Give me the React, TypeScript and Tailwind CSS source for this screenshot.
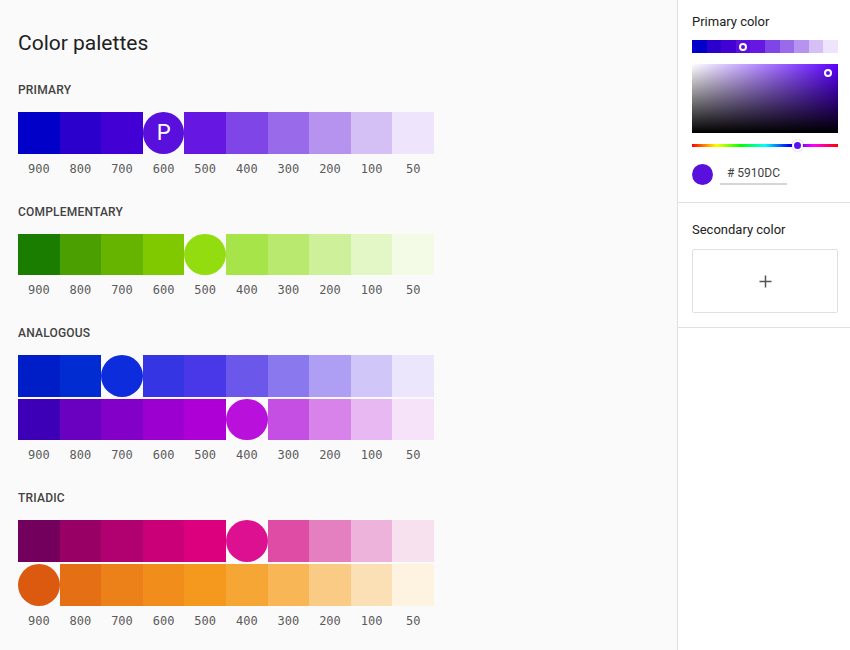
import React from 'react';

type Row = { colors: string[]; circle: number; label?: string };

interface Palette {
  name: string;
  rows: Row[];
}

const shades = ['900', '800', '700', '600', '500', '400', '300', '200', '100', '50'];

const palettes: Palette[] = [
  {
    name: 'Primary',
    rows: [
      {
        colors: ['#0000c8', '#2c00cc', '#4300d4', '#5910dc', '#6618e2', '#8045e6', '#996ae9', '#b693ee', '#d5c0f5', '#eee4fb'],
        circle: 3,
        label: 'P',
      },
    ],
  },
  {
    name: 'Complementary',
    rows: [
      {
        colors: ['#1b7d00', '#4b9f00', '#66b300', '#80c800', '#93dc10', '#a6e44a', '#b9ea6f', '#cff09b', '#e3f6c6', '#f3fbe7'],
        circle: 4,
      },
    ],
  },
  {
    name: 'Analogous',
    rows: [
      {
        colors: ['#001ec8', '#002cd2', '#0d2cdc', '#3535e3', '#4838e8', '#6c57eb', '#8a78ef', '#ae9ef4', '#d1c6f8', '#ece6fc'],
        circle: 2,
      },
      {
        colors: ['#3d00b7', '#6a00c0', '#8200c8', '#9c00d0', '#ae00d6', '#b910dc', '#c54fe2', '#d783e9', '#e8b8f2', '#f6e2f9'],
        circle: 5,
      },
    ],
  },
  {
    name: 'Triadic',
    rows: [
      {
        colors: ['#74005d', '#990066', '#b1006f', '#c90077', '#dc007e', '#dc1091', '#df4ca6', '#e480bf', '#edb3da', '#f8e1ef'],
        circle: 5,
      },
      {
        colors: ['#dc5910', '#e56f14', '#eb8118', '#f18d1a', '#f5981e', '#f6a634', '#f8b656', '#facb85', '#fce0b5', '#fef2e1'],
        circle: 0,
      },
    ],
  },
];

const SwatchRow: React.FC<{ row: Row }> = ({ row }) => (
  <div className="grid w-[416px] grid-cols-10">
    {row.colors.map((c, i) =>
      i === row.circle ? (
        <div
          key={i}
          className="flex h-[41.6px] items-center justify-center rounded-full text-[22px] text-white"
          style={{ backgroundColor: c }}
        >
          {row.label}
        </div>
      ) : (
        <div key={i} className="h-[41.6px]" style={{ backgroundColor: c }} />
      )
    )}
  </div>
);

const miniBar = ['#0000c8', '#2c00cc', '#4300d4', '#5910dc', '#6618e2', '#8045e6', '#996ae9', '#b693ee', '#d5c0f5', '#eee4fb'];

export default function App() {
  return (
    <div className="flex h-[650px] w-[850px] font-['Roboto',sans-serif] text-[#212121]">
      {/* palettes */}
      <div className="flex-1 bg-[#fafafa] pl-[18px] pt-[29px]">
        <h1 className="text-[21px] leading-[28px] font-normal">Color palettes</h1>
        <div className="mt-[25px] flex flex-col gap-[27px]">
          {palettes.map((p) => (
            <section key={p.name}>
              <h2 className="text-[12px] leading-[16px] font-medium uppercase tracking-[0.2px] text-[#424242]">
                {p.name}
              </h2>
              <div className="mt-[14px] flex flex-col gap-[2px]">
                {p.rows.map((r, i) => (
                  <SwatchRow key={i} row={r} />
                ))}
              </div>
              <div className="mt-[7px] grid w-[416px] grid-cols-10 text-center font-['DejaVu_Sans_Mono',monospace] text-[12px] leading-[16px] text-[#5a5a5a]">
                {shades.map((s) => (
                  <span key={s}>{s}</span>
                ))}
              </div>
            </section>
          ))}
        </div>
      </div>

      {/* side panel */}
      <aside className="w-[173px] border-l border-[#e0e0e0] bg-white">
        <div className="border-b border-[#e0e0e0] pl-[14px] pr-[12px] pt-[14px] pb-[17px]">
          <div className="text-[13px] leading-[16px]">Primary color</div>
          <div className="relative mt-[10px] flex h-[13px]">
            {miniBar.map((c) => (
              <div key={c} className="flex-1" style={{ backgroundColor: c }} />
            ))}
            <span className="absolute left-[47px] top-[2.5px] h-[8px] w-[8px] rounded-full border-2 border-white" />
          </div>
          <div className="relative mt-[11px] h-[69px] bg-[#5b00ff]">
            <div className="absolute inset-0 bg-linear-to-r from-white to-white/0" />
            <div className="absolute inset-0 bg-linear-to-t from-black to-black/0" />
            <span className="absolute left-[132px] top-[5px] h-[8px] w-[8px] rounded-full border-2 border-white" />
          </div>
          <div className="relative mt-[11px] h-[3px] bg-[linear-gradient(to_right,#f00,#ff0,#0f0,#0ff,#00f,#f0f,#f00)]">
            <span className="absolute left-[100px] top-[-4px] h-[11px] w-[11px] rounded-full border-2 border-white bg-[#5b10f0] shadow-[0_0_2px_rgba(0,0,0,0.3)]" />
          </div>
          <div className="mt-[17px] flex items-center gap-[7px]">
            <div className="h-[21px] w-[21px] rounded-full bg-[#5910dc]" />
            <div className="w-[67px] border-b-2 border-[#d6d6d6] pb-[2px] pl-[7px] pt-[1px] text-[12px] leading-[16px] text-[#424242]">
              # 5910DC
            </div>
          </div>
        </div>
        <div className="border-b border-[#e0e0e0] pl-[14px] pr-[12px] pt-[19px] pb-[14px]">
          <div className="text-[13px] leading-[16px]">Secondary color</div>
          <div className="mt-[11px] flex h-[64px] items-center justify-center rounded-[2px] border border-[#e0e0e0] text-[#555]">
            <svg width="13" height="13" viewBox="0 0 13 13" fill="none" stroke="currentColor" strokeWidth="1.5">
              <path d="M6.5 0.5v12M0.5 6.5h12" />
            </svg>
          </div>
        </div>
      </aside>
    </div>
  );
}
